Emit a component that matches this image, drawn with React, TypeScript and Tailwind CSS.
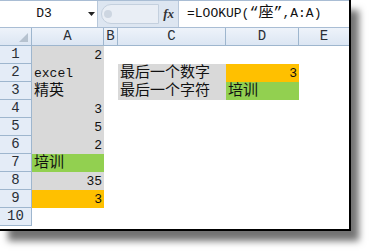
const cols = ['A', 'B', 'C', 'D', 'E'];
const colW = ['w-[72px]', 'w-[14px]', 'w-[108px]', 'w-[73px]', 'w-[51px]'];

type Cell = { text?: string; cjk?: boolean; right?: boolean; bg?: string };

const rows: Record<number, Record<string, Cell>> = {
    1: { A: { text: '2', right: true, bg: 'bg-[#d9d9d9]' } },
    2: {
        A: { text: 'excel', bg: 'bg-[#d9d9d9]' },
        C: { text: '最后一个数字', cjk: true, bg: 'bg-[#d9d9d9]' },
        D: { text: '3', right: true, bg: 'bg-[#ffc000]' },
    },
    3: {
        A: { text: '精英', cjk: true, bg: 'bg-[#d9d9d9]' },
        C: { text: '最后一个字符', cjk: true, bg: 'bg-[#d9d9d9]' },
        D: { text: '培训', cjk: true, bg: 'bg-[#92d050]' },
    },
    4: { A: { text: '3', right: true, bg: 'bg-[#d9d9d9]' } },
    5: { A: { text: '5', right: true, bg: 'bg-[#d9d9d9]' } },
    6: { A: { text: '2', right: true, bg: 'bg-[#d9d9d9]' } },
    7: { A: { text: '培训', cjk: true, bg: 'bg-[#92d050]' } },
    8: { A: { text: '35', right: true, bg: 'bg-[#d9d9d9]' } },
    9: { A: { text: '3', right: true, bg: 'bg-[#ffc000]' } },
};

function SheetCell({ cell, w }: { cell?: Cell; w: string }) {
    return (
        <div
            className={`${w} h-[18px] flex items-center px-[2px] shrink-0 ${cell?.bg ?? 'bg-white'} ${
                cell?.right ? 'justify-end' : 'justify-start'
            }`}
        >
            {cell?.text && (
                <span className={cell.cjk ? 'text-[15px] leading-none' : 'text-[13px] leading-none'}>{cell.text}</span>
            )}
        </div>
    );
}

export default function App() {
    return (
        <div
            className="w-[371px] h-[252px] bg-white text-[#111]"
            style={{ fontFamily: '"Liberation Mono", "Noto Sans CJK SC", monospace' }}
        >
            <div className="w-[351px] h-[231px] border-r-2 border-b-2 border-black overflow-hidden shadow-[8px_10px_7px_rgba(0,0,0,0.55)] bg-white">
                {/* formula bar */}
                <div className="h-[28px] flex items-stretch bg-[#dde6f1] border-t border-[#7f93ab] border-b border-[#a9bdd4]">
                    <div className="w-[98px] bg-white flex items-center border-r border-[#b8c8db]">
                        <span className="w-[88px] text-center text-[13px]">D3</span>
                        <svg width="7" height="4" viewBox="0 0 7 4">
                            <path d="M0 0h7L3.5 4z" fill="#222" />
                        </svg>
                    </div>
                    <div className="w-[80px] flex items-center pl-[3px] pr-[4px]">
                        <div className="flex-1 h-[20px] rounded-l-full bg-[#e9eef5] border border-[#c4d0de] flex items-center pl-[2px]">
                            <div className="w-[8px] h-[8px] rounded-full bg-[#cdd6e1]" />
                        </div>
                        <span className="ml-[4px] text-[13px] italic font-bold text-[#333]" style={{ fontFamily: '"Liberation Serif", serif' }}>
                            fx
                        </span>
                    </div>
                    <div className="flex-1 bg-white flex items-center pl-[8px] border-l border-[#b8c8db] text-[13px] whitespace-nowrap">
                        =LOOKUP(<span className="text-[15px]">“座”</span>,A:A)
                    </div>
                </div>

                {/* column headers */}
                <div className="flex h-[18px] bg-gradient-to-b from-[#eef3fa] to-[#dce6f3] border-b border-[#9eb6ce]">
                    <div className="w-[32px] shrink-0 border-r border-[#9eb6ce] relative">
                        <svg className="absolute right-[3px] bottom-[3px]" width="9" height="9" viewBox="0 0 9 9">
                            <path d="M9 0v9H0z" fill="#b6c2cf" />
                        </svg>
                    </div>
                    {cols.map((c, i) => (
                        <div
                            key={c}
                            className={`${colW[i]} shrink-0 border-r border-[#9eb6ce] flex items-center justify-center text-[14px] text-[#2a2f36]`}
                        >
                            {c}
                        </div>
                    ))}
                </div>

                {/* rows */}
                {Array.from({ length: 10 }, (_, r) => r + 1).map((r) => (
                    <div key={r} className="flex">
                        <div className="w-[32px] h-[18px] shrink-0 flex items-center justify-center text-[14px] text-[#2a2f36] bg-[#e4ecf7] border-r border-b border-[#9eb6ce]">
                            {r}
                        </div>
                        {cols.map((c, i) => (
                            <SheetCell key={c} cell={rows[r]?.[c]} w={colW[i]} />
                        ))}
                    </div>
                ))}
            </div>
        </div>
    );
}
